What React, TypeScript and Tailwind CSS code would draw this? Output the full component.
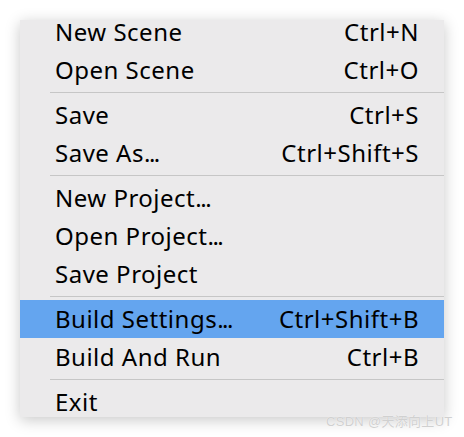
type Item = { label: string; shortcut?: string; active?: boolean; h?: string };

// groups of menu rows, split by separators
const groups: Item[][] = [
  [
    { label: 'New Scene', shortcut: 'Ctrl+N', h: 'h-[31px] pb-[7px]' },
    { label: 'Open Scene', shortcut: 'Ctrl+O' },
  ],
  [
    { label: 'Save', shortcut: 'Ctrl+S' },
    { label: 'Save As...', shortcut: 'Ctrl+Shift+S' },
  ],
  [{ label: 'New Project...' }, { label: 'Open Project...' }, { label: 'Save Project' }],
  [
    { label: 'Build Settings...', shortcut: 'Ctrl+Shift+B', active: true },
    { label: 'Build And Run', shortcut: 'Ctrl+B' },
  ],
  [{ label: 'Exit', h: 'h-[34px] pt-[4px]' }],
];

// trailing "..." is drawn a little tighter, like the Windows menu font
function Label({ text }: { text: string }) {
  if (!text.endsWith('...')) return <span>{text}</span>;
  return (
    <span>
      {text.slice(0, -3)}
      <span className="tracking-[-1.5px]">...</span>
    </span>
  );
}

function Row({ item }: { item: Item }) {
  return (
    <div
      className={`flex items-center justify-between pl-[35px] pr-[25px] ${
        item.h ?? 'h-[38px]'
      } ${item.active ? 'bg-[#64a5ef]' : ''}`}
    >
      <Label text={item.label} />
      {item.shortcut && <span>{item.shortcut}</span>}
    </div>
  );
}

export default function App() {
  return (
    <div className="relative w-[464px] h-[437px] bg-white pt-[20px] pl-[20px] overflow-hidden">
      <div
        className="w-[424px] h-[397px] bg-[#ebeaeb] shadow-[0_3px_14px_rgba(0,0,0,0.22)] text-[24px] leading-none tracking-[0.5px] text-black"
        style={{ fontFamily: '"Noto Sans", "Open Sans", sans-serif' }}
      >
        {groups.map((g, gi) => (
          <div key={gi}>
            {gi > 0 && (
              <div className="h-[7px] flex items-center pl-[30px]">
                <div className="h-px w-full bg-[#c6c6c6]" />
              </div>
            )}
            {g.map((item) => (
              <Row key={item.label} item={item} />
            ))}
          </div>
        ))}
      </div>
      {/* watermark */}
      <div
        className="absolute left-[326px] top-[412px] text-[13px] text-[#d0d0d0] tracking-[0.3px]"
        style={{ fontFamily: '"Liberation Sans", "Noto Sans CJK SC", sans-serif', textShadow: '0 0 1px #fff' }}
      >
        CSDN @天添向上UT
      </div>
    </div>
  );
}
